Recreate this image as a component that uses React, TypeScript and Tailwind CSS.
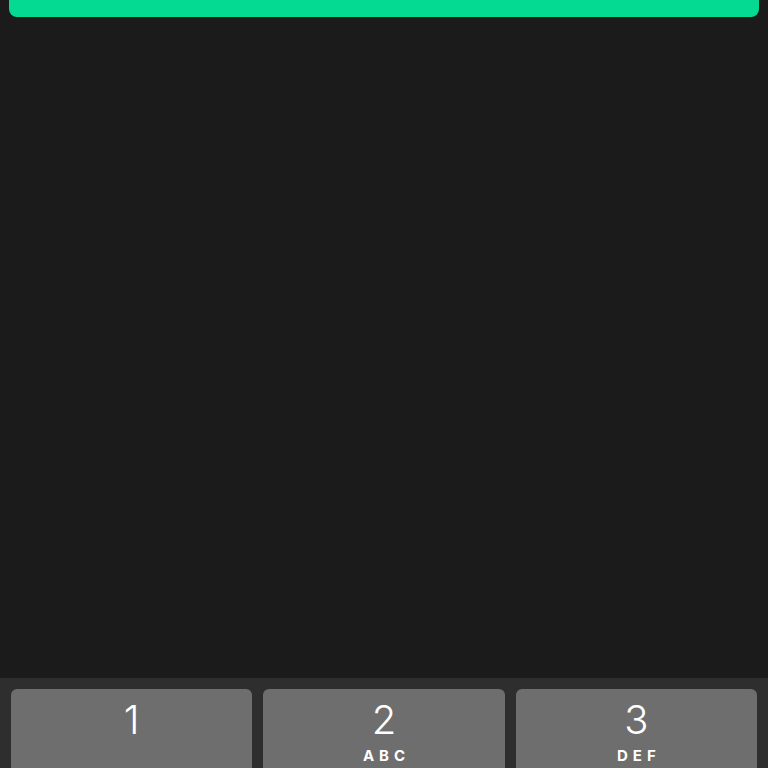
const KEYS = [
  { digit: "1", letters: "" },
  { digit: "2", letters: "ABC" },
  { digit: "3", letters: "DEF" },
];

export default function App() {
  return (
    <div className="h-screen flex flex-col overflow-hidden bg-[#1b1b1b] font-['Inter','Liberation_Sans',sans-serif]">
      <div className="shrink-0 px-[9px]">
        <div className="-mt-[10px] h-[27px] rounded-lg bg-[#05da92]" />
      </div>
      <div className="flex-1" />
      <div className="shrink-0 h-[90px] bg-[#2e2e2e] pt-[11px] px-[11px] overflow-hidden">
        <div className="grid grid-cols-3 gap-[11px]">
          {KEYS.map((k) => (
            <button
              key={k.digit}
              className="h-[96px] rounded-md bg-[#6e6e6e] flex flex-col items-center text-white"
            >
              <span className="mt-[8px] text-[40px] leading-[46px] font-light">{k.digit}</span>
              {k.letters && (
                <span className="mt-[3px] text-[15px] leading-[19px] font-bold tracking-[5px] pl-[5px]">
                  {k.letters}
                </span>
              )}
            </button>
          ))}
        </div>
      </div>
    </div>
  );
}
